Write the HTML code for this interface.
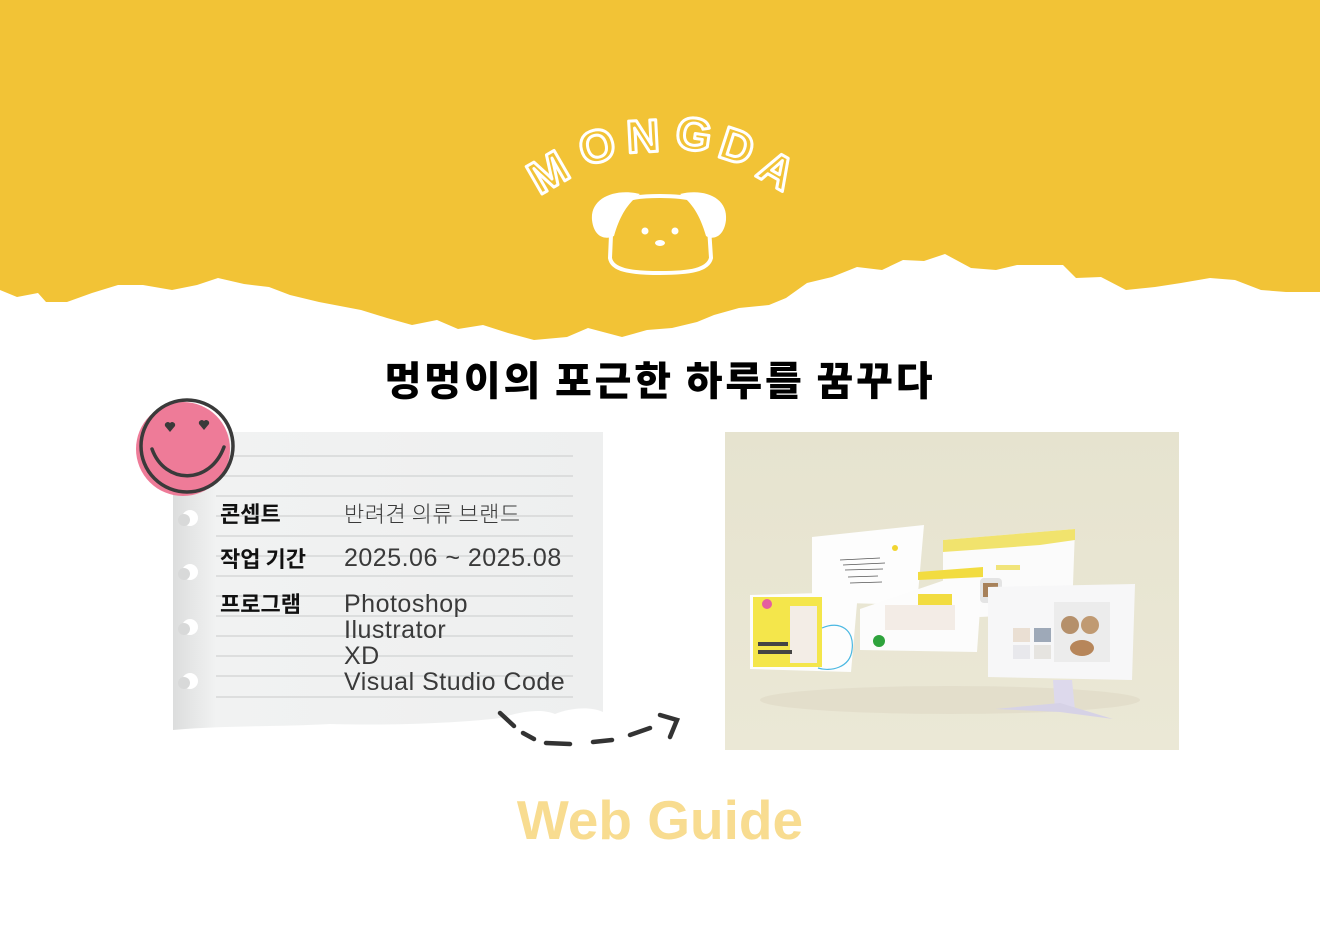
<!DOCTYPE html>
<html><head><meta charset="utf-8"><style>
html,body{margin:0;padding:0;background:#fff;}
body{width:1320px;height:933px;position:relative;overflow:hidden;font-family:"Liberation Sans","Noto Sans CJK KR",sans-serif;}
.abs{position:absolute;}
.title{left:0;width:1320px;top:350px;text-align:center;font-family:"Noto Sans CJK KR",sans-serif;font-weight:900;font-size:40px;letter-spacing:2.8px;color:#000;line-height:56px;}
.lbl{left:220px;font-family:"Noto Sans CJK KR",sans-serif;font-weight:700;font-size:22px;color:#111;line-height:26px;}
.val{left:344px;font-family:"Liberation Sans","Noto Sans CJK KR",sans-serif;font-size:25px;color:#3a3a3a;line-height:26px;letter-spacing:0.5px;}
.wg{left:0;width:1320px;top:787px;text-align:center;font-family:"Liberation Sans",sans-serif;font-weight:700;font-size:55px;color:#f8dc90;line-height:66px;}
</style></head><body>
<svg class="abs" style="left:0;top:0" width="1320" height="933" viewBox="0 0 1320 933">
<defs>
<linearGradient id="bg" x1="0" y1="0" x2="0" y2="1"><stop offset="0" stop-color="#e6e3cf"/><stop offset="1" stop-color="#ebe8d6"/></linearGradient>
<linearGradient id="pg" x1="0" y1="0" x2="1" y2="0"><stop offset="0" stop-color="#dcdddd"/><stop offset="0.1" stop-color="#f1f2f2"/><stop offset="1" stop-color="#eeefef"/></linearGradient>
</defs>
<polygon fill="#f2c336" points="0,0 1320,0 1320,292 1286,292 1261,290 1235,280 1210,278 1181,283 1155,287 1126,290 1101,277 1076,278 1063,265 1046,265 1017,265 996,270 971,268 945,254 924,261 903,260 882,270 857,267 832,277 807,283 786,298 769,305 739,308 714,315 697,322 672,328 647,330 622,337 588,328 567,337 534,340 508,333 483,325 458,329 437,320 412,325 387,318 361,310 319,302 290,295 269,287 244,284 218,278 197,285 172,290 143,285 118,285 92,293 67,302 46,302 38,293 17,297 0,290"/>
<g fill="none" stroke="#fff" stroke-width="3" stroke-linejoin="round" font-family="Liberation Sans, sans-serif" font-weight="700" font-size="46">
<text x="548" y="188" text-anchor="middle" transform="rotate(-30 548 172)">M</text>
<text x="597" y="162" text-anchor="middle" transform="rotate(-14 597 146)">O</text>
<text x="643" y="152" text-anchor="middle" transform="rotate(-3 643 136)">N</text>
<text x="694" y="150" text-anchor="middle" transform="rotate(8 694 134)">G</text>
<text x="737" y="162" text-anchor="middle" transform="rotate(18 737 146)">D</text>
<text x="777" y="186" text-anchor="middle" transform="rotate(30 777 170)">A</text>
</g>
<path d="M612,212 C618,200 630,196 660,196 C690,196 702,200 708,212 L711,258 C708,270 690,273 660,273 C630,273 612,270 610,258 Z" fill="none" stroke="#fff" stroke-width="4"/>
<path d="M640,194 C615,188 590,198 592,220 C594,238 606,240 614,236 C620,215 628,203 640,194 Z" fill="#fff"/>
<path d="M680,194 C705,188 728,198 726,220 C724,238 712,240 706,236 C700,215 692,203 680,194 Z" fill="#fff"/>
<circle cx="645" cy="231" r="3.5" fill="#fff"/><circle cx="675" cy="231" r="3.5" fill="#fff"/>
<ellipse cx="660" cy="243" rx="5" ry="3" fill="#fff"/>
<path d="M173,432 L603,432 L603,712 C590,706 570,708 555,714 C540,708 520,712 500,718 C470,722 400,726 330,724 C280,727 230,725 173,730 Z" fill="url(#pg)"/>
<g fill="#fff"><circle cx="190" cy="518" r="8"/><circle cx="190" cy="572" r="8"/><circle cx="190" cy="627" r="8"/><circle cx="190" cy="681" r="8"/></g>
<g fill="#d8d9d9"><circle cx="184" cy="520" r="6"/><circle cx="184" cy="574" r="6"/><circle cx="184" cy="629" r="6"/><circle cx="184" cy="683" r="6"/></g>
<g stroke="#c9cbcb" stroke-width="1">
<line x1="216" y1="456" x2="573" y2="456"/><line x1="216" y1="476" x2="573" y2="476"/><line x1="216" y1="496" x2="573" y2="496"/><line x1="216" y1="516" x2="573" y2="516"/><line x1="216" y1="536" x2="573" y2="536"/><line x1="216" y1="556" x2="573" y2="556"/><line x1="216" y1="576" x2="573" y2="576"/><line x1="216" y1="596" x2="573" y2="596"/><line x1="216" y1="616" x2="573" y2="616"/><line x1="216" y1="636" x2="573" y2="636"/><line x1="216" y1="656" x2="573" y2="656"/><line x1="216" y1="676" x2="573" y2="676"/><line x1="216" y1="697" x2="573" y2="697"/>
</g>
<circle cx="183" cy="449" r="47" fill="#ee7b98"/>
<circle cx="187" cy="446" r="46" fill="none" stroke="#3a3a3a" stroke-width="3.5"/>
<path d="M152,449 C165,485 210,485 224,447" fill="none" stroke="#3a3a3a" stroke-width="3.5" stroke-linecap="round"/>
<path d="M170,432 l-5,-6 a3,3 0 0 1 5,-3 a3,3 0 0 1 5,3 z" fill="#3a3a3a"/>
<path d="M204,430 l-5,-6 a3,3 0 0 1 5,-3 a3,3 0 0 1 5,3 z" fill="#3a3a3a"/>
<g fill="none" stroke="#333" stroke-width="4.5" stroke-linecap="round">
<path d="M500,713 L514,726"/><path d="M523,733 L534,739"/><path d="M546,743 L570,744"/><path d="M593,742 L612,740"/><path d="M630,735 L650,728"/>
<path d="M660,715 L677,720 L670,737"/>
</g>
<rect x="725" y="432" width="454" height="318" fill="url(#bg)"/>
<ellipse cx="950" cy="700" rx="190" ry="14" fill="#ddd9c4" opacity="0.6"/>
<polygon points="812,537 924,525 917,605 812,602" fill="#fdfdfd"/>
<g stroke="#555" stroke-width="0.7"><line x1="840" y1="560" x2="880" y2="558"/><line x1="843" y1="565" x2="885" y2="563"/><line x1="845" y1="570" x2="883" y2="569"/><line x1="848" y1="577" x2="878" y2="576"/><line x1="850" y1="583" x2="882" y2="582"/></g>
<circle cx="895" cy="548" r="3" fill="#f1d531"/>
<polygon points="943,540 1075,529 1072,612 980,617 943,612" fill="#fbfbfb"/>
<polygon points="943,540 1075,529 1075,540 1040,545 1000,548 943,552" fill="#f1e36d"/>
<rect x="996" y="565" width="24" height="5" fill="#f1e47a"/>
<polygon points="860,609 983,567 977,652 860,650" fill="#fcfcfc"/>
<polygon points="918,572 983,567 983,577 918,580" fill="#f2dc40"/>
<rect x="918" y="594" width="34" height="14" fill="#f2dc40"/>
<rect x="885" y="605" width="70" height="25" fill="#f3ece6"/>
<circle cx="879" cy="641" r="6" fill="#2ea33c"/>
<rect x="980" y="578" width="22" height="25" rx="4" fill="#e4e4e4"/>
<rect x="983" y="583" width="15" height="14" fill="#a7815a"/>
<polygon points="988,587 1135,584 1132,680 988,677" fill="#f7f7f8"/>
<rect x="1054" y="602" width="56" height="60" fill="#ececec"/>
<circle cx="1070" cy="625" r="9" fill="#b5906b"/><circle cx="1090" cy="625" r="9" fill="#c09a72"/><ellipse cx="1082" cy="648" rx="12" ry="8" fill="#b7865a"/>
<rect x="1013" y="628" width="17" height="14" fill="#eadfd3"/><rect x="1034" y="628" width="17" height="14" fill="#9ea9b8"/><rect x="1013" y="645" width="17" height="14" fill="#e8e8ec"/><rect x="1034" y="645" width="17" height="14" fill="#e6e4e0"/>
<polygon points="1053,680 1072,680 1075,710 1055,710" fill="#ddd9ec"/>
<polygon points="995,709 1060,703 1113,719 1060,712" fill="#d6d2e6"/>
<polygon points="750,595 858,592 851,672 750,669" fill="#fdfdfd"/>
<rect x="753" y="597" width="69" height="70" fill="#f4e64b"/>
<rect x="790" y="606" width="27" height="57" fill="#f3ede6"/>
<circle cx="767" cy="604" r="5" fill="#e55fa0"/>
<path d="M822,628 C840,620 855,630 852,650 C850,668 830,672 818,668" fill="none" stroke="#4bb8e2" stroke-width="1.2"/>
<rect x="758" y="642" width="30" height="4" fill="#444"/><rect x="758" y="650" width="34" height="4" fill="#444"/>
</svg>
<div class="abs title">멍멍이의 포근한 하루를 꿈꾸다</div>
<div class="abs lbl" style="top:500px">콘셉트</div>
<div class="abs lbl" style="top:545px">작업 기간</div>
<div class="abs lbl" style="top:590px">프로그램</div>
<div class="abs val" style="top:500px;font-family:'Noto Sans CJK KR',sans-serif;font-weight:300;font-size:22px;letter-spacing:0.5px">반려견 의류 브랜드</div>
<div class="abs val" style="top:545px">2025.06 ~ 2025.08</div>
<div class="abs val" style="top:591px">Photoshop<br>Ilustrator<br>XD<br>Visual Studio Code</div>
<div class="abs wg">Web Guide</div>
</body></html>
